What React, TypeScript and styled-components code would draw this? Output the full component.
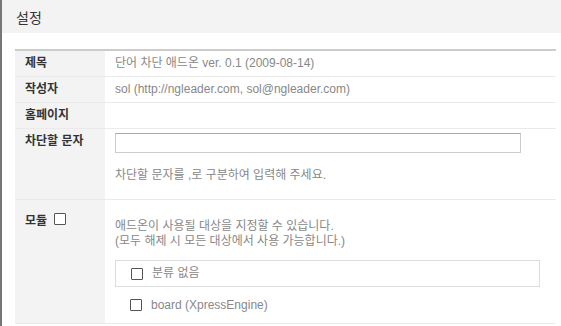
import styled, { createGlobalStyle } from 'styled-components';

const GlobalStyle = createGlobalStyle`
  html, body {
    margin: 0;
    padding: 0;
    background: #fff;
  }
  body {
    font-family: "Liberation Sans", "Noto Sans CJK KR", sans-serif;
    font-size: 12px;
    color: #333;
  }
`;

const Page = styled.div`
  border-left: 2px solid #777;
  min-height: 326px;
  box-sizing: border-box;
`;

const Header = styled.h2`
  margin: 0;
  height: 33px;
  background: #f3f3f3;
  padding-left: 14px;
  font-size: 14px;
  font-weight: normal;
  line-height: 37px;
  color: #333;
`;

const Body = styled.div`
  padding: 16px 5px 0 13px;
`;

const Table = styled.table`
  width: 100%;
  border-collapse: collapse;
  border-top: 2px solid #ccc;
`;

const Row = styled.tr`
  border-bottom: 1px solid #eaeaea;
`;

const Label = styled.th<{ $top?: number }>`
  width: 70px;
  background: #f3f3f3;
  padding: ${(p) => p.$top ?? 6}px 10px 6px 10px;
  text-align: left;
  vertical-align: top;
  font-weight: bold;
  line-height: 13px;
  color: #333;
  white-space: nowrap;
`;

const Value = styled.td<{ $pad?: string }>`
  padding: ${(p) => p.$pad ?? '6px 10px'};
  vertical-align: top;
  line-height: 13px;
  color: #888;
`;

const TextInput = styled.input`
  display: block;
  box-sizing: border-box;
  width: 406px;
  height: 20px;
  margin: 0;
  border: 1px solid #ccc;
  border-top-color: #a9a9a9;
  padding: 0 4px;
  font: inherit;
`;

const Hint = styled.p`
  margin: 16px 0 0;
  line-height: 13px;
  color: #888;
`;

const Description = styled.p`
  margin: 0;
  line-height: 15px;
  color: #888;
`;

const Check = styled.input.attrs({ type: 'checkbox' })`
  appearance: none;
  width: 12px;
  height: 12px;
  margin: 0;
  flex: none;
  box-sizing: border-box;
  border: 1px solid #555;
  border-radius: 1px;
  background: #fff;
  vertical-align: middle;
`;

const LabelCheck = styled(Check)`
  margin: -6px 0 0 4px;
`;

const ModuleList = styled.ul`
  list-style: none;
  margin: 11px 0 0;
  padding: 0;
`;

const ModuleItem = styled.li<{ $boxed?: boolean }>`
  display: flex;
  align-items: center;
  gap: 9px;
  width: 425px;
  box-sizing: border-box;
  height: ${(p) => (p.$boxed ? 27 : 36)}px;
  padding-left: 15px;
  border: ${(p) => (p.$boxed ? '1px solid #ddd' : 'none')};
  color: #888;
`;

export default function App() {
  return (
    <Page>
      <GlobalStyle />
      <Header>설정</Header>
      <Body>
        <Table>
          <tbody>
            <Row>
              <Label>제목</Label>
              <Value>단어 차단 애드온 ver. 0.1 (2009-08-14)</Value>
            </Row>
            <Row>
              <Label>작성자</Label>
              <Value>sol (http://ngleader.com, sol@ngleader.com)</Value>
            </Row>
            <Row>
              <Label>홈페이지</Label>
              <Value></Value>
            </Row>
            <Row>
              <Label>차단할 문자</Label>
              <Value $pad="4px 10px 17px">
                <TextInput type="text" />
                <Hint>차단할 문자를 ,로 구분하여 입력해 주세요.</Hint>
              </Value>
            </Row>
            <Row>
              <Label $top={15}>
                모듈 <LabelCheck />
              </Label>
              <Value $pad="19px 10px 0">
                <Description>
                  애드온이 사용될 대상을 지정할 수 있습니다.
                  <br />
                  (모두 해제 시 모든 대상에서 사용 가능합니다.)
                </Description>
                <ModuleList>
                  <ModuleItem $boxed>
                    <Check />
                    분류 없음
                  </ModuleItem>
                  <ModuleItem>
                    <Check />
                    board (XpressEngine)
                  </ModuleItem>
                </ModuleList>
              </Value>
            </Row>
          </tbody>
        </Table>
      </Body>
    </Page>
  );
}
